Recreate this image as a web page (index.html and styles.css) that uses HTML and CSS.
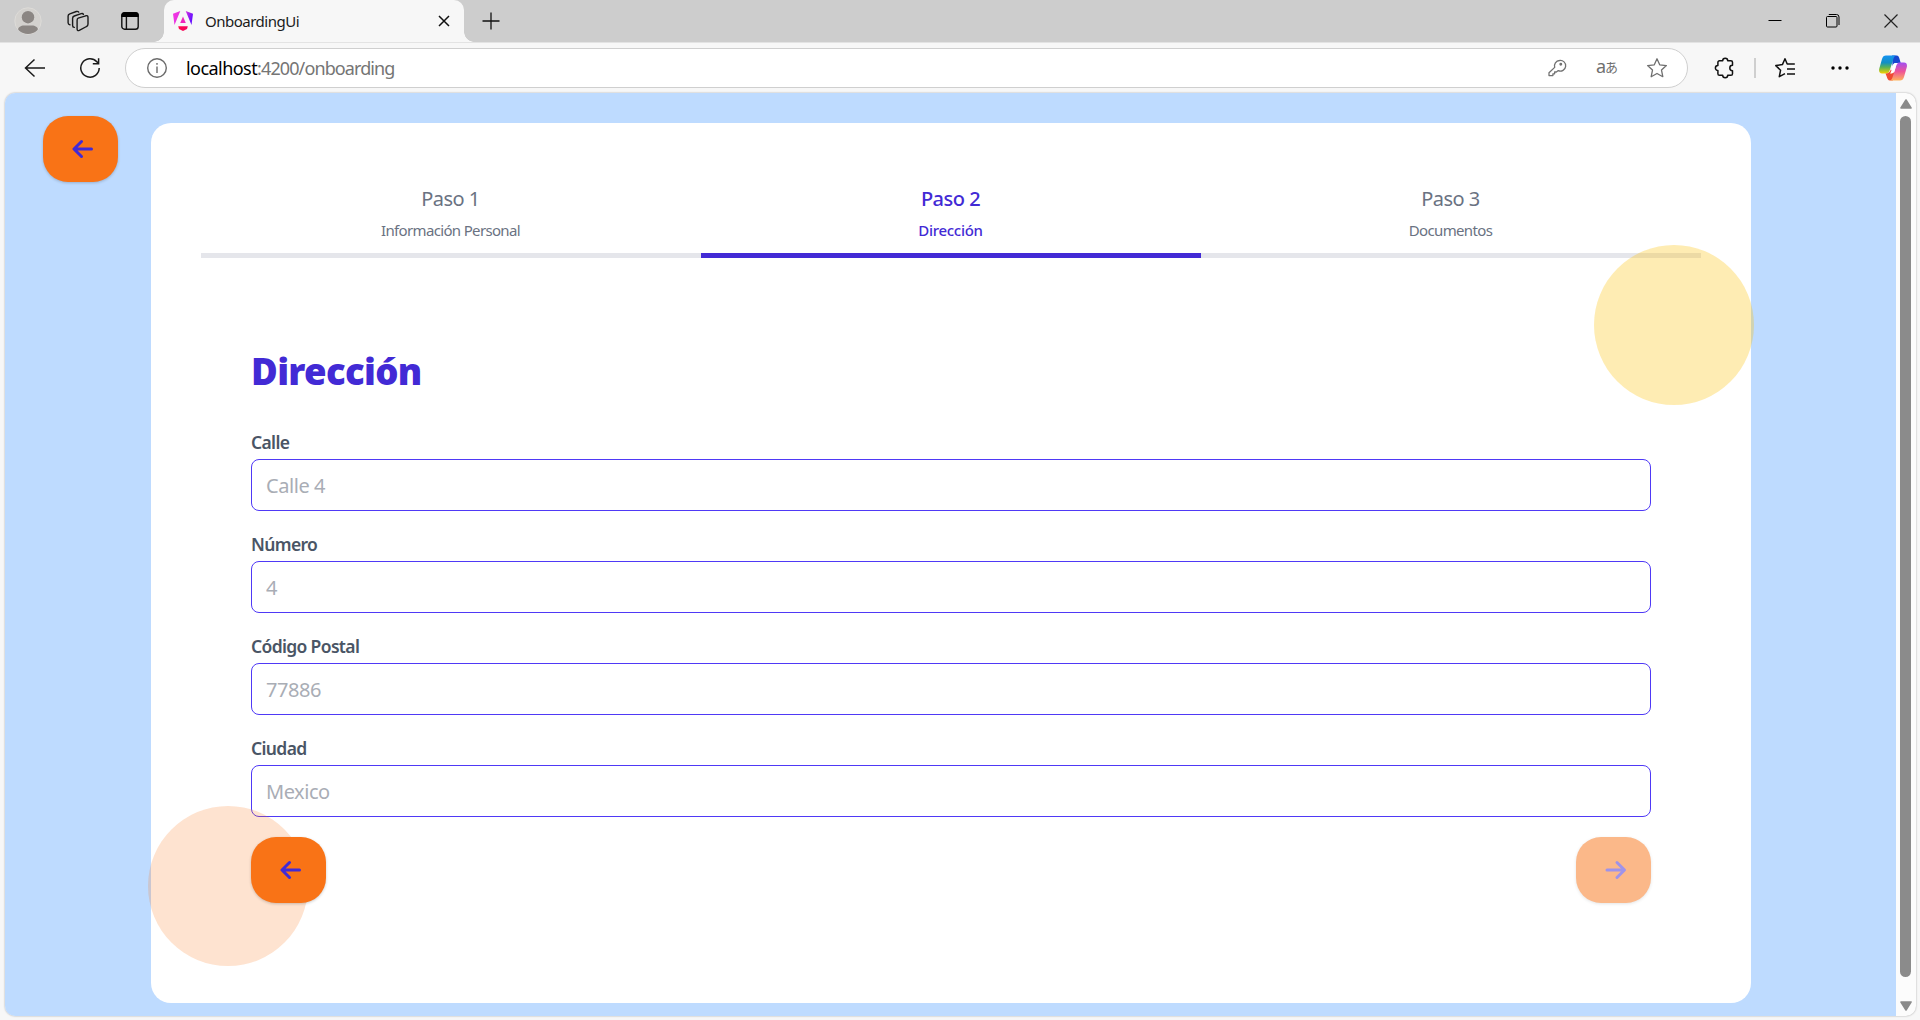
FILE: index.html
```html
<!DOCTYPE html>
<html lang="es">
<head>
<meta charset="utf-8">
<title>OnboardingUi</title>
<link rel="stylesheet" href="styles.css">
</head>
<body>
<div class="browser">
  <header class="tabstrip">
    <svg class="avatar" width="28" height="28" viewBox="0 0 28 28"><defs><clipPath id="face"><circle cx="14" cy="14" r="13"/></clipPath></defs><circle cx="14" cy="14" r="13.2" fill="#d3d1ce" stroke="#dddbd8"/><g fill="#8b8683" clip-path="url(#face)"><circle cx="14" cy="10.2" r="6.2"/><path d="M4 28v-5c0-3 3-4.500 6-4.500h8c3 0 6 1.500 6 4.500v5z"/></g></svg>
    <svg class="spaces" width="24" height="24" viewBox="0 0 24 24" fill="none" stroke="#1b1b1b" stroke-width="1.400" stroke-linejoin="round" stroke-linecap="round"><path d="M12.200 9.200 19.700 6.800Q22 6.200 22 8.500V15Q22 16.800 20.500 17.500L13.300 21.300Q11.100 22.300 11.100 20V11.200Q11.100 9.600 12.200 9.200z"/><path d="M8.300 18.400Q6.600 18.300 6.600 16.500V9.300Q6.600 7.600 8.300 7L15.200 4.700Q16.800 4.200 17.400 5.300"/><path d="M3.900 15.800Q2.100 15.500 2.100 13.800V7.100Q2.100 5.400 3.800 4.800L10.300 2.500Q12 2 12.700 3.100"/></svg>
    <svg class="tabmenu" width="20" height="20" viewBox="0 0 20 20"><rect x="1.800" y="1.800" width="16.400" height="16.400" rx="2.800" fill="none" stroke="#111" stroke-width="1.400"/><path d="M1.300 6V4.200A3 3 0 0 1 4.200 1.200h11.600a3 3 0 0 1 2.900 3V6z" fill="#000"/><path d="M6.400 6v12" stroke="#111" stroke-width="1.400"/></svg>
    <div class="tab">
      <svg width="20" height="20" viewBox="0 0 20 20"><defs><linearGradient id="ng" x1="0" y1="0" x2="1" y2=".25"><stop offset="0" stop-color="#f637e3"/><stop offset=".6" stop-color="#dd2fe0"/><stop offset="1" stop-color="#6a12ff"/></linearGradient><linearGradient id="nr" x1="0" x2="1"><stop offset="0" stop-color="#ff0a4c"/><stop offset="1" stop-color="#f50463"/></linearGradient></defs><path d="M0 2.800 7.300 0 1.500 14zM12.700 0 20 2.800 18.500 14z" fill="url(#ng)"/><path d="M5.200 15.300h9.600L14 18l-4 2-4-2z" fill="url(#nr)"/><path d="M10 5.500 12.800 12H7.200z" fill="#ef26bc"/></svg>
      <span class="tab-title">OnboardingUi</span>
      <svg width="12" height="12" viewBox="0 0 12 12" stroke="#111" stroke-width="1.500"><path d="m1 1 10 10M11 1 1 11"/></svg>
    </div>
    <svg class="newtab" width="18" height="18" viewBox="0 0 18 18" stroke="#111" stroke-width="1.300"><path d="M9 .5v17M.5 9h17"/></svg>
    <div class="window-controls">
      <svg width="14" height="14" viewBox="0 0 14 14"><path d="M.5 6.500h13" stroke="#000"/></svg>
      <svg width="14" height="14" viewBox="0 0 14 14" fill="none" stroke="#000"><rect x=".5" y="2.500" width="10.500" height="10.500" rx="1"/><path d="M2.800.500h7.700a2.500 2.500 0 0 1 2.500 2.500v8"/></svg>
      <svg width="14" height="14" viewBox="0 0 14 14" stroke="#222" stroke-width="1.200"><path d="m.5.500 13 13M13.500.500.500 13.500"/></svg>
    </div>
  </header>

  <nav class="toolbar">
    <svg class="nav-back" width="22" height="20" viewBox="0 0 22 20" fill="none" stroke="#1a1a1a" stroke-width="1.500"><path d="M21 10H1.500M10.500 1.500 1.500 10l9 8.500"/></svg>
    <svg class="nav-reload" width="22" height="22" viewBox="0 0 22 22" fill="none" stroke="#1a1a1a" stroke-width="1.500"><path d="M20.200 11A9.200 9.200 0 1 1 17.800 4.800L19.500 6.600M19.600 1.200v5.600h-5.800"/></svg>
    <div class="address">
      <svg width="22" height="22" viewBox="0 0 22 22" fill="none" stroke="#6b6b6b" stroke-width="1.400"><circle cx="11" cy="11" r="9.300"/><path d="M11 9.500v6.500M11 6v1.700"/></svg>
      <span class="url"><b>localhost</b>:4200/onboarding</span>
      <svg class="key" width="20" height="20" viewBox="0 0 20 20" fill="none" stroke="#717171" stroke-width="1.300" stroke-linejoin="round"><path d="M12.500 2.500a5.300 5.300 0 1 1-1.200 10.100L9.400 14H7.600v1.800H5.900v1.800H2V14.800l5.700-5.400A5.300 5.300 0 0 1 12.500 2.500z"/><circle cx="13.800" cy="6.300" r=".8" fill="#717171"/></svg>
      <span class="translate">a<i>あ</i></span>
      <svg class="star" width="22" height="22" viewBox="0 0 22 22" fill="none" stroke="#6f6f6f" stroke-width="1.300" stroke-linejoin="round"><path d="m11 1.800 2.700 6 6.700.800-4.900 4.500 1.300 6.600L11 16.500l-5.800 3.200 1.300-6.600L1.600 8.600l6.700-.8z"/></svg>
    </div>
    <svg class="extensions" width="22" height="22" viewBox="0 0 22 22" fill="none" stroke="#111" stroke-width="1.500" stroke-linejoin="round"><path d="M5.500 3.700h3.200a2.500 2.500 0 0 1 5 0h3.200a1.600 1.600 0 0 1 1.600 1.600v3a2.700 2.700 0 1 0 0 5.400v3a1.600 1.600 0 0 1-1.600 1.600h-3.200a2.500 2.500 0 0 1-5 0H5.500a1.600 1.600 0 0 1-1.600-1.600v-3.200a2.500 2.500 0 0 1 0-5V5.300a1.600 1.600 0 0 1 1.600-1.600z"/></svg>
    <span class="divider"></span>
    <svg class="favorites" width="22" height="22" viewBox="0 0 22 22" fill="none" stroke="#111" stroke-width="1.500" stroke-linejoin="round"><path d="M20.800 7H13.200L11 1.800 8.400 7.600 1.800 8.600l4.800 4.600-1.300 6.500L11 16.600M13 12h8M13 17h8"/></svg>
    <svg class="more" width="18" height="6" viewBox="0 0 18 6"><circle cx="2" cy="3" r="1.700"/><circle cx="9" cy="3" r="1.700"/><circle cx="16" cy="3" r="1.700"/></svg>
    <svg class="copilot" width="28" height="26" viewBox="0 0 28 26"><defs><linearGradient id="c1" x1="0" y1="0" x2="0" y2="1"><stop offset="0" stop-color="#1593f2"/><stop offset=".4" stop-color="#128fc4"/><stop offset=".65" stop-color="#57b258"/><stop offset="1" stop-color="#f5d000"/></linearGradient><linearGradient id="c2" x1=".4" y1="0" x2=".4" y2="1"><stop offset="0" stop-color="#a14ff2"/><stop offset=".5" stop-color="#ee5498"/><stop offset="1" stop-color="#ffb35c"/></linearGradient></defs><path d="M13 .5h4.500c2 0 2.500 1.500 3.200 4l1 3.500H17c-2 0-3 1-3.500 3z" fill="#1748cf"/><path d="M7 .5h10.500c-2 0-2.600 2-3.300 4L11 14.500c-1 3-2 4-4.500 4H3c-2.500 0-3.500-2-2.700-5L3 4C3.700 1.500 5 .5 7 .5z" fill="url(#c1)"/><path d="M6.500 18.500c3 0 4.500-1.500 5.300-4l4 3-2 8H11c-2 0-2.700-2-3.300-4z" fill="#f04a32"/><path d="M20 7.500h5c2.500 0 3.500 2 2.700 5L25 22c-.7 2.500-2 3.500-4 3.500H10.500c2 0 2.600-2 3.300-4L17 11.500c.8-3 1.500-4 3-4z" fill="url(#c2)"/><path d="M16 8h3.500c-1.500 0-2 1.500-2.700 3.500l-1.500 5c-.5 1.500-1.500 2-4.300 2 .8-1 1.300-2.500 1.800-4l1-3.500c.5-1.500 1-2.500 2.200-3z" fill="#fff"/></svg>
  </nav>

  <div class="viewport">
    <main class="page">
      <button class="btn btn-top" aria-label="Volver"><svg width="22" height="20" viewBox="0 0 22 20"><path d="M19.500 10H2.500M9.500 2.500 2 10l7.500 7.500"/></svg></button>
      <section class="card">
        <ol class="steps">
          <li class="step"><span class="step-name">Paso 1</span><span class="step-desc">Información Personal</span></li>
          <li class="step active"><span class="step-name">Paso 2</span><span class="step-desc">Dirección</span></li>
          <li class="step"><span class="step-name">Paso 3</span><span class="step-desc">Documentos</span></li>
        </ol>
        <form class="form">
          <h1 class="title">Dirección</h1>
          <label class="field"><span>Calle</span><input type="text" placeholder="Calle 4"></label>
          <label class="field"><span>Número</span><input type="text" placeholder="4"></label>
          <label class="field"><span>Código Postal</span><input type="text" placeholder="77886"></label>
          <label class="field"><span>Ciudad</span><input type="text" placeholder="Mexico"></label>
          <div class="actions">
            <button type="button" class="btn" aria-label="Anterior"><svg width="22" height="20" viewBox="0 0 22 20"><path d="M19.500 10H2.500M9.500 2.500 2 10l7.500 7.500"/></svg></button>
            <button type="button" class="btn" disabled aria-label="Siguiente"><svg width="22" height="20" viewBox="0 0 22 20"><path d="M2 10h17M12 2.500 19.500 10l-7.500 7.500"/></svg></button>
          </div>
        </form>
      </section>
      <div class="blob blob-yellow"></div>
      <div class="blob blob-orange"></div>
    </main>
    <div class="scrollbar">
      <svg width="12" height="10" viewBox="0 0 12 10"><path d="M6 1 11 9H1z" fill="#8b8b8b" stroke="#8b8b8b" stroke-width="1.600" stroke-linejoin="round"/></svg>
      <div class="thumb"></div>
      <svg width="12" height="10" viewBox="0 0 12 10"><path d="M6 9 11 1H1z" fill="#8b8b8b" stroke="#8b8b8b" stroke-width="1.600" stroke-linejoin="round"/></svg>
    </div>
  </div>
</div>
</body>
</html>
```
FILE: styles.css
```css
* { box-sizing: border-box; }
body { margin: 0; font-family: "Noto Sans", "Open Sans", sans-serif; background: #f7f7f7; overflow: hidden; }
svg { display: block; flex: none; }
.browser { display: flex; flex-direction: column; width: 1920px; height: 1020px; }

/* tab strip */
.tabstrip { display: flex; align-items: center; height: 42px; background: #cdcdcd; flex: none; }
.avatar { margin-left: 14px; }
.spaces { margin-left: 24px; }
.tabmenu { margin-left: 30px; }
.tab { position: relative; display: flex; align-items: center; align-self: stretch; width: 300px; margin-left: 24px; padding: 0 14px 0 9px; background: #f7f7f7; border-radius: 10px 10px 0 0; }
.tab::before, .tab::after { content: ""; position: absolute; bottom: 0; width: 10px; height: 10px; }
.tab::before { left: -10px; background: radial-gradient(circle at 0 0, transparent 9.500px, #f7f7f7 10px); }
.tab::after { right: -10px; background: radial-gradient(circle at 100% 0, transparent 9.500px, #f7f7f7 10px); }
.tab-title { flex: 1; margin-left: 12px; padding-bottom: 1px; font-size: 15px; letter-spacing: -0.500px; line-height: 20px; color: #1b1b1b; }
.newtab { margin-left: 18px; }
.window-controls { display: flex; gap: 44px; margin-left: auto; padding-right: 22px; }

/* toolbar */
.toolbar { display: flex; align-items: center; height: 51px; padding-bottom: 1px; background: #f7f7f7; flex: none; border-top: 1px solid #e3e3e3; }
.nav-back { margin-left: 24px; }
.nav-reload { margin-left: 33px; }
.address { display: flex; align-items: center; width: 1563px; height: 40px; margin-left: 24px; padding: 0 19px 0 20px; background: #fff; border: 1px solid #cfcfcf; border-radius: 20px; }
.url { flex: 1; margin-left: 18px; font-size: 18px; letter-spacing: -0.900px; line-height: 24px; color: #757575; }
.url b { font-weight: 400; letter-spacing: -0.550px; color: #000; }
.translate { display: flex; align-items: center; width: 22px; margin: 0 28px 0 29px; font-size: 18px; line-height: 20px; color: #6f6f6f; padding-bottom: 3px; }
.translate i { font: 13px/20px "Noto Sans CJK JP", sans-serif; margin-left: -1px; padding-top: 1px; }
.extensions { margin-left: 26px; }
.divider { width: 2px; height: 20px; margin-left: 18px; background: #cfcfcf; }
.favorites { margin-left: 18px; }
.more { margin-left: 35px; }
.copilot { margin-left: 30px; }

/* viewport */
.viewport { display: flex; width: 1911px; height: 923px; margin-left: 5px; border-radius: 10px; overflow: hidden; background: #fcfcfc; box-shadow: 0 0 2px rgba(0,0,0,.35); }
.page { position: relative; width: 1891px; height: 923px; padding: 30px 145px 0 146px; background: #bedbff; }
.card { height: 880px; padding: 50px; background: #fff; border-radius: 20px; }
.steps { display: flex; list-style: none; margin: 0; padding: 0; }
.step { display: flex; flex: 1; flex-direction: column; align-items: center; height: 85px; padding: 11px 1px 0 0; border-bottom: 5px solid #e5e6eb; color: #6a7282; }
.step-name { font-size: 20px; line-height: 30px; letter-spacing: -0.500px; }
.step-desc { margin-top: 4px; font-size: 15px; line-height: 24px; letter-spacing: -0.660px; }
.active { color: #422ad5; border-color: #422ad5; font-weight: 500; }
.active .step-desc { letter-spacing: -0.280px; }

.form { padding: 88px 50px 0; }
.title { margin: 0 0 33px; font-size: 36.500px; font-weight: 900; line-height: 50px; letter-spacing: -0.650px; color: #422ad5; }
.field { display: block; height: 102px; }
.field span { display: block; height: 30px; font-size: 17.500px; font-weight: 600; line-height: 26px; letter-spacing: -0.650px; color: #4a5565; }
.field input { display: block; width: 100%; height: 52px; padding: 1px 14px 0; border: 1px solid #4f39f6; border-radius: 8px; background: #fff; font: 20px "Noto Sans", sans-serif; letter-spacing: -0.450px; outline: 0; }
.field input::placeholder { color: #a9adb5; opacity: 1; }
.actions { display: flex; justify-content: space-between; }

.btn { position: relative; z-index: 2; display: flex; align-items: center; justify-content: center; width: 75px; height: 66px; padding: 0 0 1px 4px; border: 0; border-radius: 25px; background: #f97316; box-shadow: 0 1px 3px rgba(0,0,0,.2); }
.btn path { fill: none; stroke: #422ad5; stroke-width: 3; stroke-linecap: round; stroke-linejoin: round; }
.btn:disabled { opacity: .5; }
.btn-top { position: absolute; left: 38px; top: 23px; }

.blob { position: absolute; z-index: 1; width: 160px; height: 160px; border-radius: 50%; }
.blob-yellow { left: 1589px; top: 152px; background: rgba(253,193,3,.3); }
.blob-orange { left: 143px; top: 713px; background: rgba(249,115,22,.2); }

.scrollbar { display: flex; flex-direction: column; align-items: center; width: 19px; padding: 6px 0 5px; }
.thumb { flex: 1; width: 11px; margin: 7px 0 24px; border-radius: 6px; background: #8b8b8b; }
```
